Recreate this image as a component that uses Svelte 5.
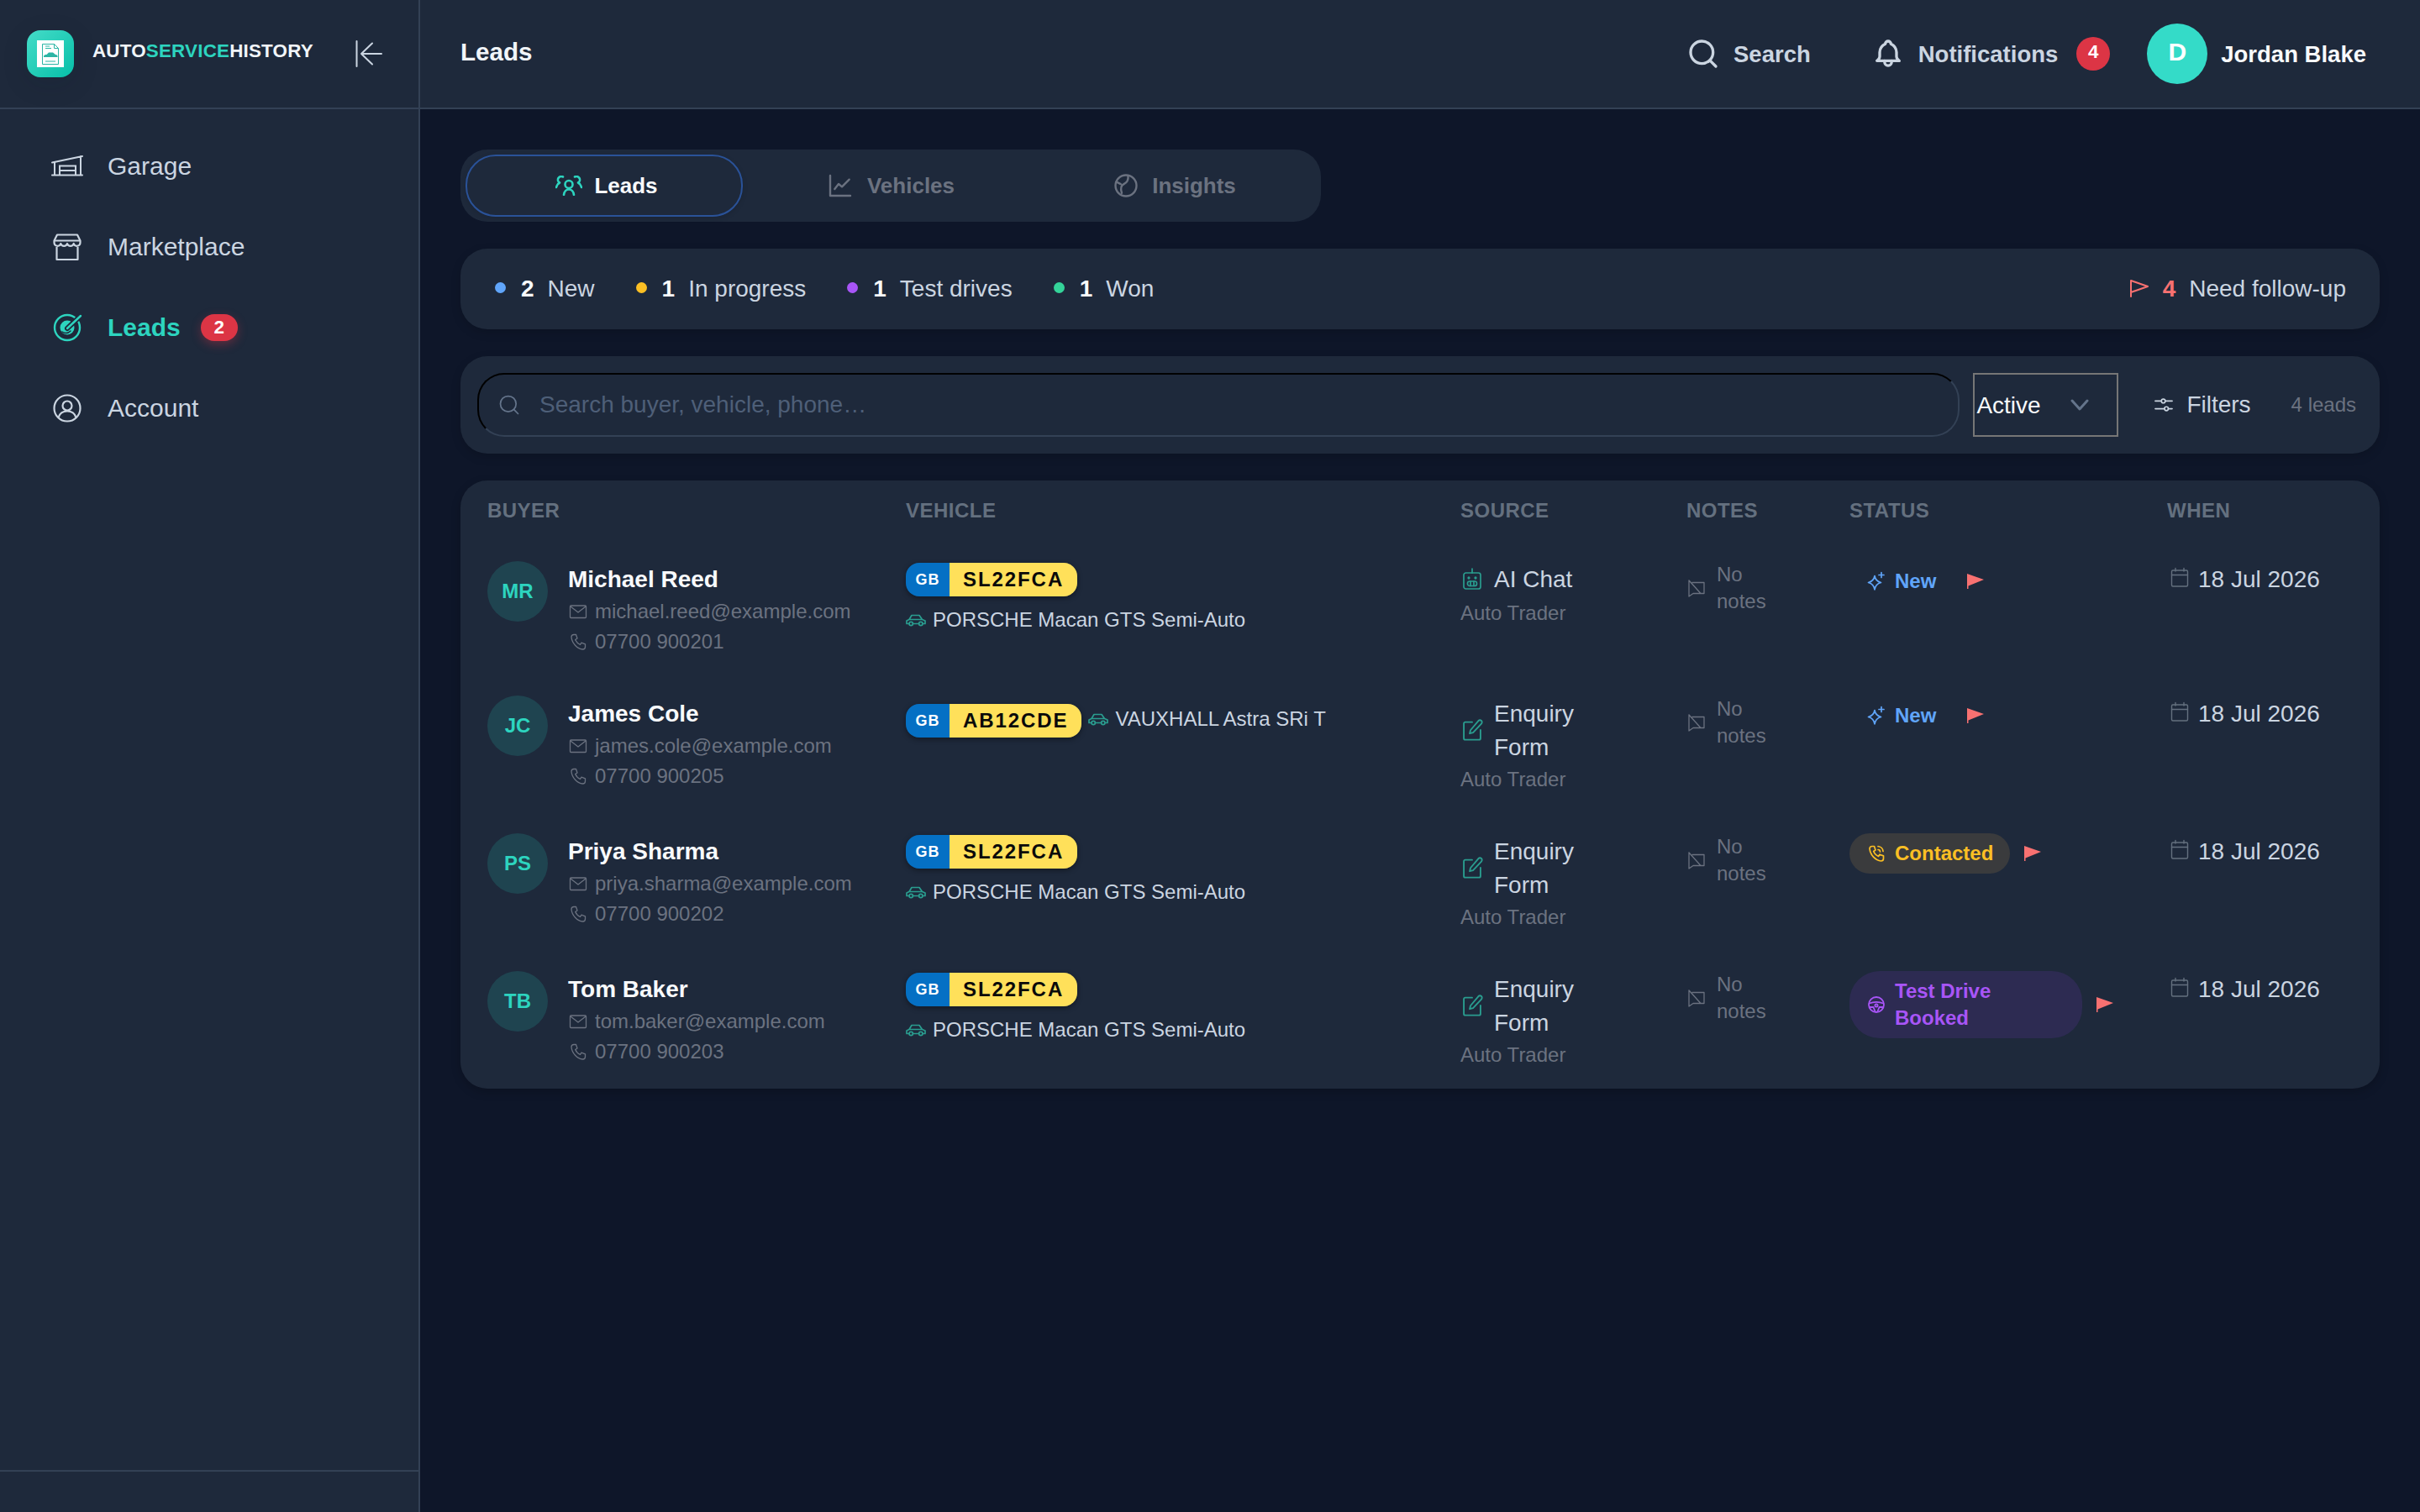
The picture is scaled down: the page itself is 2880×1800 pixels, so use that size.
<script lang="ts">
  const stats = [
    { count: 2, label: 'New', color: '#60a5fa' },
    { count: 1, label: 'In progress', color: '#fbbf24' },
    { count: 1, label: 'Test drives', color: '#a855f7' },
    { count: 1, label: 'Won', color: '#34d399' },
  ];

  const leads = [
    { initials: 'MR', name: 'Michael Reed', email: 'michael.reed@example.com', phone: '07700 900201', plate: 'SL22FCA', car: 'PORSCHE Macan GTS Semi-Auto', single: false, source: 'AI Chat', status: 'new', label: 'New' },
    { initials: 'JC', name: 'James Cole', email: 'james.cole@example.com', phone: '07700 900205', plate: 'AB12CDE', car: 'VAUXHALL Astra SRi T', single: true, source: 'Enquiry Form', status: 'new', label: 'New' },
    { initials: 'PS', name: 'Priya Sharma', email: 'priya.sharma@example.com', phone: '07700 900202', plate: 'SL22FCA', car: 'PORSCHE Macan GTS Semi-Auto', single: false, source: 'Enquiry Form', status: 'contacted', label: 'Contacted' },
    { initials: 'TB', name: 'Tom Baker', email: 'tom.baker@example.com', phone: '07700 900203', plate: 'SL22FCA', car: 'PORSCHE Macan GTS Semi-Auto', single: false, source: 'Enquiry Form', status: 'drive', label: 'Test Drive Booked' },
  ];
</script>

{#snippet flagFilled()}
  <svg class="flag-solid" viewBox="0 0 20 18" width="20" height="18">
    <path d="M0 0 20 7 1.5 14.5V18H0z" fill="currentColor" />
  </svg>
{/snippet}

<div class="app">
  <aside class="sidebar">
    <div class="brand">
      <div class="logo">
        <div class="logo-paper">
          <svg viewBox="0 0 32 32" width="32" height="32" fill="none" stroke="#2bb5a5" stroke-width="1">
            <path d="M6.500 4.500h14l5 5v19h-19z" />
            <path d="M20.500 4.500v5h5" />
            <path d="M10 7h5M10 9.500h7M10 25h12" />
            <path d="M8 19c0-1.400 2-2 3.500-2l2.500-2.500h5l3 2.500c1.500.2 2.500.8 2.500 2v1H8z" fill="#2bb5a5" stroke="none" />
          </svg>
        </div>
      </div>
      <div class="brand-name">AUTO<span>SERVICE</span>HISTORY</div>
      <svg class="collapse" viewBox="0 0 32 32" width="32" height="32" fill="none" stroke="currentColor" stroke-width="2" stroke-linecap="round" stroke-linejoin="round">
        <path d="M1.500 1v30M7 16h24M7 16 20 3.500M7 16l13 12.500" />
      </svg>
    </div>

    <nav class="nav">
      <div class="nav-item">
        <svg viewBox="0 0 40 40" width="40" height="40" fill="none" stroke="currentColor" stroke-width="2" stroke-linecap="round">
          <path d="M2 15.500 38 8M5 15v15.500M36 8v22.500M2 30.500h36M11 30.500V19.500h19v11M11 25h19" />
        </svg>
        <span>Garage</span>
      </div>
      <div class="nav-item">
        <svg viewBox="0 0 40 40" width="40" height="40" fill="none" stroke="currentColor" stroke-width="2.200" stroke-linejoin="round">
          <path d="M8 5.500h24l3.500 7v2.500a4 4 0 0 1-7.800 1 4 4 0 0 1-7.700 0 4 4 0 0 1-7.700 0 4 4 0 0 1-7.800-1v-2.500z" />
          <path d="M4.500 12.500h31M7.500 20v15h25V20" />
        </svg>
        <span>Marketplace</span>
      </div>
      <div class="nav-item active">
        <svg viewBox="0 0 40 40" width="40" height="40" fill="none" stroke="currentColor" stroke-width="2.400" stroke-linecap="round">
          <circle cx="20" cy="20" r="15" />
          <circle cx="20" cy="20" r="8.500" fill="currentColor" stroke="none" />
          <path d="M20 21 37 5" stroke="#1e293b" stroke-width="6" />
          <path d="M20 21 36 6" />
          <path d="M14 25c3 2 7 2 10-1" stroke="#1e293b" stroke-width="1.500" />
        </svg>
        <span>Leads</span>
        <span class="nav-badge">2</span>
      </div>
      <div class="nav-item">
        <svg viewBox="0 0 40 40" width="40" height="40" fill="none" stroke="currentColor" stroke-width="2.200">
          <circle cx="20" cy="20" r="15.500" />
          <circle cx="20" cy="17" r="5.500" />
          <path d="M9.500 31c1.500-5 5-7.500 10.500-7.500S29 26 30.500 31" />
        </svg>
        <span>Account</span>
      </div>
    </nav>

    <div class="sidebar-foot"></div>
  </aside>

  <div class="page">
    <header class="topbar">
      <h1>Leads</h1>
      <div class="top-actions">
        <div class="top-btn">
          <svg viewBox="0 0 24 24" width="40" height="40" fill="none" stroke="currentColor" stroke-width="2" stroke-linecap="round">
            <circle cx="11" cy="11" r="8" /><path d="m21 21-4.300-4.300" />
          </svg>
          <span>Search</span>
        </div>
        <div class="top-btn notif">
          <svg viewBox="0 0 24 24" width="40" height="40" fill="none" stroke="currentColor" stroke-width="2" stroke-linecap="round" stroke-linejoin="round">
            <path d="M10 5a2 2 0 1 1 4 0 7 7 0 0 1 4 6v3a4 4 0 0 0 2 3H4a4 4 0 0 0 2-3v-3a7 7 0 0 1 4-6" />
            <path d="M9.500 17v1a2.500 2.500 0 0 0 5 0v-1" />
          </svg>
          <span>Notifications</span>
          <div class="notif-count">4</div>
        </div>
        <div class="user">
          <div class="user-avatar">D</div>
          <span>Jordan Blake</span>
        </div>
      </div>
    </header>

    <main class="content">
      <div class="tabs">
        <div class="tab on">
          <svg class="teal" viewBox="0 0 32 24" width="32" height="24" fill="none" stroke="currentColor" stroke-width="2.600" stroke-linecap="round" stroke-linejoin="round">
            <circle cx="16" cy="10.500" r="4.500" />
            <path d="M10 23c.5-4 3-6.500 6-6.500s5.500 2.500 6 6.500M9 1.500a4 4 0 0 0-4 7c-2 1-3.500 3-4 5.500M23 1.500a4 4 0 0 1 4 7c2 1 3.500 3 4 5.500" />
          </svg>
          Leads
        </div>
        <div class="tab">
          <svg viewBox="0 0 24 24" width="32" height="32" fill="none" stroke="currentColor" stroke-width="1.800" stroke-linecap="round" stroke-linejoin="round">
            <path d="M3 3v18h18M7 15l3.500-4.500 3 2.500L20 6.500" />
          </svg>
          Vehicles
        </div>
        <div class="tab">
          <svg viewBox="0 0 24 24" width="30" height="30" fill="none" stroke="currentColor" stroke-width="1.900" stroke-linecap="round" stroke-linejoin="round">
            <circle cx="12" cy="12" r="10" />
            <path d="M14 2.500c.5 4-1 6.500-4 8-2.500 1.200-3.500 4-2 8.500M3 8.500l4 2" />
          </svg>
          Insights
        </div>
      </div>

      <section class="stats">
        {#each stats as s}
          <div class="stat">
            <span class="dot" style="background:{s.color}"></span>
            <b>{s.count}</b>
            <span>{s.label}</span>
          </div>
        {/each}
        <div class="follow">
          <svg viewBox="0 0 24 22" width="24" height="22" fill="none" stroke="currentColor" stroke-width="2" stroke-linecap="round" stroke-linejoin="round">
            <path d="M2 21V2l20 7-20 7" />
          </svg>
          <b>4</b>
          <span>Need follow-up</span>
        </div>
      </section>

      <section class="toolbar">
        <div class="search">
          <svg viewBox="0 0 24 24" width="28" height="28" fill="none" stroke="currentColor" stroke-width="1.500" stroke-linecap="round">
            <circle cx="11" cy="11" r="8" /><path d="m21 21-4.300-4.300" />
          </svg>
          <input placeholder="Search buyer, vehicle, phone…" />
        </div>
        <div class="select-wrap">
          <select>
            <option>Active</option>
          </select>
          <svg viewBox="0 0 24 14" width="24" height="14" fill="none" stroke="currentColor" stroke-width="3" stroke-linecap="round" stroke-linejoin="round">
            <path d="m3 2 9 10 9-10" />
          </svg>
        </div>
        <div class="filters">
          <svg viewBox="0 0 24 24" width="22" height="22" fill="none" stroke="currentColor" stroke-width="1.800" stroke-linecap="round">
            <path d="M1 7h8M14 7h9M1 17h12M18 17h5" />
            <circle cx="11.500" cy="7" r="2.500" /><circle cx="15.500" cy="17" r="2.500" />
          </svg>
          Filters
        </div>
        <span class="count">4 leads</span>
      </section>

      <section class="card">
        <table>
          <colgroup>
            <col class="c-buyer" /><col class="c-vehicle" /><col class="c-source" /><col class="c-notes" /><col class="c-status" /><col class="c-when" />
          </colgroup>
          <thead>
            <tr>
              <th>BUYER</th><th>VEHICLE</th><th>SOURCE</th><th>NOTES</th><th>STATUS</th><th>WHEN</th>
            </tr>
          </thead>
          <tbody>
            {#each leads as l}
              <tr>
                <td>
                  <div class="buyer">
                    <div class="avatar">{l.initials}</div>
                    <div>
                      <div class="name">{l.name}</div>
                      <div class="contact">
                        <svg viewBox="0 0 24 24" width="24" height="24" fill="none" stroke="currentColor" stroke-width="1.300" stroke-linejoin="round">
                          <rect x="2.500" y="5" width="19" height="14.500" rx="1" /><path d="m3 6 9 7 9-7" />
                        </svg>
                        {l.email}
                      </div>
                      <div class="contact">
                        <svg viewBox="0 0 24 24" width="24" height="24" fill="none" stroke="currentColor" stroke-width="1.300" stroke-linecap="round" stroke-linejoin="round">
                          <path d="M7 3.500h2.500l1.500 4.500-2.300 1.500a11 11 0 0 0 5.800 6l1.500-2.300 4.500 1.700V18a3 3 0 0 1-3 3C11 20.500 4.500 13.500 4 6.500a3 3 0 0 1 3-3" />
                        </svg>
                        {l.phone}
                      </div>
                    </div>
                  </div>
                </td>
                <td>
                  <div class="vehicle" class:single={l.single}>
                    <div class="plate"><span class="gb">GB</span><span class="reg">{l.plate}</span></div>
                    <div class="car">
                      <svg viewBox="0 0 24 16" width="24" height="16" fill="none" stroke="currentColor" stroke-width="1.700" stroke-linecap="round" stroke-linejoin="round">
                        <path d="M4 12.500H1V9l3-1.500 3-5h9l3.500 5 3.500 1.500v3.500H20M8.500 12.500h7M4 7.500h15.500" />
                        <circle cx="6.200" cy="12.500" r="2.200" /><circle cx="17.800" cy="12.500" r="2.200" />
                      </svg>
                      {l.car}
                    </div>
                  </div>
                </td>
                <td>
                  <div class="source" class:chat={l.source === 'AI Chat'}>
                    {#if l.source === 'AI Chat'}
                      <svg viewBox="0 0 28 28" width="28" height="28" fill="none" stroke="currentColor" stroke-width="1.700" stroke-linecap="round" stroke-linejoin="round">
                        <rect x="4" y="7" width="20" height="19" rx="2.500" />
                        <path d="M14 7V2" />
                        <circle cx="10" cy="13" r=".8" /><circle cx="18" cy="13" r=".8" />
                        <rect x="8.500" y="17" width="11" height="5.500" rx="2.500" /><path d="M12 17v5.500M16 17v5.500" />
                      </svg>
                    {:else}
                      <svg viewBox="0 0 24 24" width="28" height="28" fill="none" stroke="currentColor" stroke-width="1.600" stroke-linecap="round" stroke-linejoin="round">
                        <path d="M12 4H5a1.500 1.500 0 0 0-1.500 1.500v15A1.500 1.500 0 0 0 5 22h14a1.500 1.500 0 0 0 1.500-1.500V12" />
                        <path d="M18.400 2.600a1.500 1.500 0 0 1 3 3l-8.500 9-3.400 1 .8-3.400z" />
                      </svg>
                    {/if}
                    <span>{l.source}</span>
                  </div>
                  <div class="origin">Auto Trader</div>
                </td>
                <td>
                  <div class="notes">
                    <svg viewBox="0 0 24 24" width="24" height="24" fill="none" stroke="currentColor" stroke-width="1.300" stroke-linecap="round" stroke-linejoin="round">
                      <path d="M3 3v19l5-3.500h13V5.500L7 5.500M3 3l14 15.500" />
                    </svg>
                    <span>No notes</span>
                  </div>
                </td>
                <td>
                  <div class="status-cell">
                    <div class="badge {l.status}">
                      {#if l.status === 'new'}
                        <svg viewBox="0 0 24 24" width="24" height="24" fill="none" stroke="currentColor" stroke-width="1.700" stroke-linejoin="round" stroke-linecap="round">
                          <path d="M10 5.500c.7 4.500 3 6.800 7.500 8-4.500 1.200-6.800 3.500-7.500 8.500-.7-5-3-7.300-7.500-8.500 4.500-1.200 6.800-3.500 7.500-8z" />
                          <path d="M18 1.500v6M15 4.500h6" />
                        </svg>
                      {:else if l.status === 'contacted'}
                        <svg viewBox="0 0 24 24" width="24" height="24" fill="none" stroke="currentColor" stroke-width="1.700" stroke-linejoin="round" stroke-linecap="round">
                          <path d="M7 3.500h2.500l1.500 4.500-2.300 1.500a11 11 0 0 0 5.800 6l1.500-2.300 4.500 1.700V18a3 3 0 0 1-3 3C11 20.500 4.500 13.500 4 6.500a3 3 0 0 1 3-3" />
                          <path d="M14 3.500a6.500 6.500 0 0 1 6 6M14 7.500a2.500 2.500 0 0 1 2.500 2.500" />
                        </svg>
                      {:else}
                        <svg viewBox="0 0 24 24" width="24" height="24" fill="none" stroke="currentColor" stroke-width="1.800" stroke-linejoin="round" stroke-linecap="round">
                          <circle cx="12" cy="12" r="9" />
                          <circle cx="12" cy="13" r="1.600" />
                          <path d="M3.500 10.500c5.500-2.200 11.500-2.200 17 0M4 15h4.500l2 5M20 15h-4.500l-2 5" />
                        </svg>
                      {/if}
                      <span>{l.label}</span>
                    </div>
                    {@render flagFilled()}
                  </div>
                </td>
                <td>
                  <div class="when">
                    <svg viewBox="0 0 24 24" width="24" height="24" fill="none" stroke="currentColor" stroke-width="1.400" stroke-linejoin="round" stroke-linecap="round">
                      <rect x="2.500" y="4" width="19" height="19" rx="1.500" /><path d="M2.500 9.500h19M7 1.500V5M17 1.500V5" />
                    </svg>
                    <span>18 Jul 2026</span>
                  </div>
                </td>
              </tr>
            {/each}
          </tbody>
        </table>
      </section>
    </main>
  </div>
</div>

<style>
  :global(body) {
    margin: 0;
    background: #0e1629;
  }

  .app {
    width: 2880px;
    min-height: 1800px;
    display: grid;
    grid-template-columns: 500px 1fr;
    font-family: "Liberation Sans", Arial, sans-serif;
    color: #cbd5e1;
    background: #0e1629;
  }

  /* sidebar */
  .sidebar {
    background: #1e293b;
    border-right: 2px solid #334155;
    box-sizing: border-box;
    display: flex;
    flex-direction: column;
  }

  .brand {
    height: 130px;
    box-sizing: border-box;
    border-bottom: 2px solid #334155;
    display: flex;
    align-items: flex-start;
    padding: 36px 0 0 32px;
  }

  .logo {
    width: 56px;
    height: 56px;
    border-radius: 16px;
    background: linear-gradient(135deg, #45dcc8, #06bfa8);
    display: flex;
    align-items: center;
    justify-content: center;
    box-shadow: 0 8px 32px rgba(15, 23, 42, 0.12);
    flex: none;
  }

  .logo-paper {
    width: 32px;
    height: 32px;
    background: #fff;
    display: flex;
  }

  .brand-name {
    margin: 11px 0 0 22px;
    font-size: 22.4px;
    line-height: 28px;
    font-weight: 700;
    letter-spacing: 0.2px;
    color: #f1f5f9;
    white-space: nowrap;
  }

  .brand-name span { color: #2dd4bf; }

  .collapse {
    margin: 12px 0 0 50px;
    color: #cbd5e1;
    flex: none;
  }

  .nav {
    flex: 1;
    padding: 20px 0 0 60px;
  }

  .nav-item {
    height: 96px;
    display: flex;
    align-items: center;
    gap: 28px;
    font-size: 30px;
    color: #cbd5e1;
  }

  .nav-item.active {
    color: #2dd4bf;
    font-weight: 700;
  }

  .nav-badge {
    margin-left: -4px;
    min-width: 44px;
    height: 32px;
    border-radius: 16px;
    background: #dc3545;
    color: #fff;
    font-size: 22.4px;
    line-height: 32px;
    text-align: center;
    box-shadow: 0 4px 12px rgba(220, 53, 69, 0.35);
  }

  .sidebar-foot {
    height: 48px;
    border-top: 2px solid #334155;
  }

  /* top bar */
  .topbar {
    height: 130px;
    box-sizing: border-box;
    background: #1e293b;
    border-bottom: 2px solid #334155;
    display: flex;
    align-items: center;
    justify-content: space-between;
    padding: 0 64px 0 48px;
  }

  h1 {
    margin: -4px 0 0;
    font-size: 29.6px;
    font-weight: 700;
    color: #f1f5f9;
  }

  .top-actions {
    display: flex;
    align-items: center;
    font-size: 27.5px;
    font-weight: 700;
  }

  .top-actions span {
    padding-top: 2px;
  }

  .top-btn {
    display: flex;
    align-items: center;
    gap: 16px;
  }

  .notif {
    margin-left: 72px;
  }

  .notif-count {
    margin-left: 6px;
    width: 40px;
    height: 40px;
    border-radius: 50%;
    background: #dc3545;
    color: #fff;
    font-size: 22.4px;
    line-height: 36px;
    text-align: center;
  }

  .user {
    margin-left: 44px;
    display: flex;
    align-items: center;
    gap: 16px;
    color: #f8fafc;
  }

  .user-avatar {
    width: 72px;
    height: 72px;
    border-radius: 50%;
    background: #34dbc8;
    color: #fff;
    font-size: 30px;
    line-height: 68px;
    text-align: center;
  }

  /* content */
  .content {
    padding: 48px;
    display: flex;
    flex-direction: column;
    gap: 32px;
  }

  .tabs {
    width: 1024px;
    height: 86px;
    box-sizing: border-box;
    padding: 6px;
    background: #1e293b;
    border-radius: 32px;
    display: grid;
    grid-template-columns: repeat(3, 330px);
    gap: 8px;
  }

  .tab {
    box-sizing: border-box;
    height: 74px;
    padding-left: 6px;
    border-radius: 36px;
    border: 2px solid transparent;
    display: flex;
    align-items: center;
    justify-content: center;
    gap: 16px;
    font-size: 26px;
    font-weight: 700;
    color: #6b7280;
  }

  .tab.on {
    gap: 14px;
    border-color: #2a5298;
    color: #f8fafc;
    box-shadow: 0 2px 6px rgba(0, 0, 0, 0.12);
  }

  .teal { color: #2dd4bf; }

  .stats {
    height: 96px;
    box-sizing: border-box;
    padding: 0 40px;
    background: #1e293b;
    border-radius: 32px;
    box-shadow: 0 4px 12px rgba(0, 0, 0, 0.15);
    display: flex;
    align-items: center;
    gap: 48px;
    font-size: 28px;
  }

  .stat, .follow {
    display: flex;
    align-items: center;
    gap: 16px;
  }

  .stat b { color: #f8fafc; }

  .dot {
    width: 13px;
    height: 13px;
    border-radius: 50%;
    margin: -3px 2px 0 1px;
  }

  .follow {
    margin-left: auto;
  }

  .follow svg, .follow b { color: #f87171; }
  .follow svg { margin-top: -2px; }

  .toolbar {
    height: 116px;
    box-sizing: border-box;
    padding: 0 28px 0 20px;
    background: #1e293b;
    border-radius: 32px;
    box-shadow: 0 4px 12px rgba(0, 0, 0, 0.15);
    display: flex;
    align-items: center;
    gap: 16px;
    font-size: 28px;
  }

  .search {
    flex: 1;
    position: relative;
    display: flex;
  }

  .search svg {
    position: absolute;
    left: 24px;
    top: 24px;
    color: #64748b;
  }

  .search input {
    flex: 1;
    height: 76px;
    box-sizing: border-box;
    padding: 0 0 0 72px;
    border-radius: 32px;
    border: 2px solid;
    border-color: #000 #334155 #334155 #000;
    background: #1e293b;
    color: #f8fafc;
    font: 28px "Liberation Sans", Arial, sans-serif;
    outline: none;
  }

  .search input::placeholder { color: #4e5f78; }

  .select-wrap {
    position: relative;
    width: 173px;
    flex: none;
  }

  .select-wrap select {
    width: 100%;
    height: 76px;
    box-sizing: border-box;
    appearance: none;
    background: transparent;
    border: 2px solid #767676;
    border-radius: 0;
    padding: 0 0 0 2px;
    color: #f8fafc;
    font: 28px "Liberation Sans", Arial, sans-serif;
  }

  .select-wrap svg {
    position: absolute;
    right: 34px;
    top: 31px;
    color: #64748b;
    pointer-events: none;
  }

  .filters {
    display: flex;
    align-items: center;
    gap: 16px;
    padding: 0 32px 0 27px;
  }

  .count {
    font-size: 24px;
    color: #6b7280;
  }

  /* table */
  .card {
    background: #1e293b;
    border-radius: 32px;
    box-shadow: 0 4px 12px rgba(0, 0, 0, 0.2);
    overflow: hidden;
  }

  table {
    width: 100%;
    table-layout: fixed;
    border-collapse: collapse;
  }

  .c-buyer { width: 498px; }
  .c-vehicle { width: 660px; }
  .c-source { width: 269px; }
  .c-notes { width: 194px; }
  .c-status { width: 378px; }

  th {
    height: 72px;
    padding: 0 32px;
    text-align: left;
    font-size: 24px;
    font-weight: 700;
    letter-spacing: 0.48px;
    color: #64707f;
  }

  td {
    padding: 24px 32px;
    vertical-align: top;
  }

  .buyer {
    display: flex;
    gap: 24px;
  }

  .avatar {
    width: 72px;
    height: 72px;
    flex: none;
    border-radius: 50%;
    background: #1f4450;
    color: #2dd4bf;
    font-size: 24px;
    font-weight: 700;
    line-height: 72px;
    text-align: center;
  }

  .name {
    padding-top: 2px;
    font-size: 28px;
    line-height: 40px;
    font-weight: 700;
    color: #f8fafc;
  }

  .contact {
    margin-top: 4px;
    display: flex;
    align-items: center;
    gap: 8px;
    font-size: 24px;
    line-height: 32px;
    color: #6b7280;
    white-space: nowrap;
  }

  .name + .contact { margin-top: 2px; }

  .vehicle {
    padding-top: 2px;
    display: flex;
    flex-wrap: wrap;
    align-items: center;
    gap: 14px 8px;
  }

  .vehicle.single { padding-top: 10px; }
  .vehicle.single .car { margin-top: -4px; }

  .plate {
    height: 40px;
    display: flex;
    border-radius: 16px;
    overflow: hidden;
    box-shadow: 0 2px 6px rgba(0, 0, 0, 0.4);
    font-weight: 700;
  }

  .gb {
    width: 52px;
    background: #0570c4;
    color: #fff;
    font-size: 18px;
    line-height: 40px;
    letter-spacing: 1px;
    text-align: center;
  }

  .reg {
    padding: 0 16px;
    background: #ffe05a;
    color: #0a0a0a;
    font-size: 24px;
    line-height: 40px;
    letter-spacing: 1.92px;
  }

  .car {
    display: flex;
    align-items: center;
    gap: 8px;
    font-size: 24px;
    line-height: 28px;
    color: #cbd5e1;
  }

  .car svg, .source svg { color: #2a9d8f; flex: none; }

  .source {
    display: flex;
    align-items: center;
    gap: 12px;
    font-size: 28px;
    line-height: 40px;
    color: #cbd5e1;
  }

  .source span { padding-top: 2px; }

  .origin {
    margin-top: 2px;
    font-size: 24px;
    line-height: 32px;
    color: #6b7280;
  }

  .source.chat + .origin { margin-top: 4px; }

  .notes {
    display: flex;
    align-items: center;
    gap: 12px;
    font-size: 24px;
    line-height: 32px;
    color: #6b7280;
  }

  .notes svg { flex: none; }

  .status-cell {
    display: flex;
    align-items: center;
    gap: 17px;
    color: #f87171;
  }

  .flag-solid { flex: none; }

  .badge {
    display: flex;
    align-items: center;
    gap: 10px;
    padding: 8px 20px;
    border-radius: 36px;
    font-size: 24px;
    line-height: 32px;
    font-weight: 700;
  }

  .badge svg { flex: none; }

  .badge.new { color: #60a5fa; }
  .badge.contacted { color: #fbbf24; background: #3a3b3d; }
  .badge.drive { color: #a855f7; background: #2d2b52; }

  .when {
    display: flex;
    align-items: flex-start;
    gap: 10px;
    padding-left: 3px;
    font-size: 28px;
    line-height: 40px;
    color: #cbd5e1;
    white-space: nowrap;
  }

  .when span { padding-top: 2px; }
  .when svg { color: #64707f; margin-top: 7px; }
</style>
